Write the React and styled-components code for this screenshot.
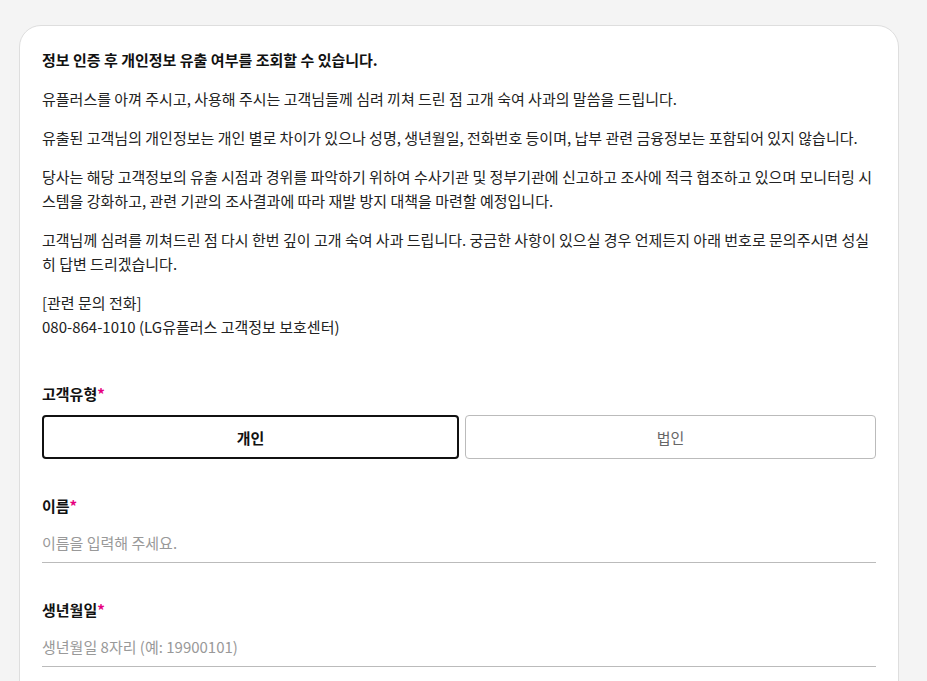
import React from 'react';
import styled, { createGlobalStyle } from 'styled-components';

const GlobalStyle = createGlobalStyle`
  html, body {
    margin: 0;
    padding: 0;
    overflow: hidden;
    background: #f4f4f4;
  }
  body {
    font-family: "Noto Sans CJK KR", "Noto Sans", sans-serif;
    color: #222;
  }
  * { box-sizing: border-box; }
`;

const Page = styled.div`
  padding: 25px 28px 0 19px;
`;

const Card = styled.div`
  background: #fff;
  border: 1px solid #dedede;
  border-radius: 22px;
  padding: 22px 22px 80px;
`;

const Notice = styled.div`
  font-size: 15px;
  line-height: 24px;
  word-break: break-all;
`;

const Para = styled.p`
  margin: 0 0 15px;
  font-weight: ${p => (p.strong ? 700 : 400)};
  color: ${p => (p.strong ? '#111' : '#222')};
  &:last-child { margin-bottom: 0; }
`;

const Form = styled.div`
  margin-top: 44px;
  display: flex;
  flex-direction: column;
  gap: 36px;
`;

const Field = styled.div`
  display: flex;
  flex-direction: column;
`;

const Label = styled.div`
  font-size: 15px;
  line-height: 22px;
  font-weight: 700;
  color: #111;
  margin-bottom: ${p => (p.tight ? '4px' : '10px')};
`;

const Req = styled.span`
  color: #e6007e;
`;

const Segments = styled.div`
  display: grid;
  grid-template-columns: 417fr 411fr;
  gap: 6px;
`;

const Segment = styled.button`
  height: 44px;
  background: #fff;
  border-radius: 4px;
  border: ${p => (p.active ? '2px solid #111' : '1px solid #bbb')};
  font-family: inherit;
  font-size: 15px;
  font-weight: ${p => (p.active ? 700 : 400)};
  color: ${p => (p.active ? '#111' : '#666')};
  cursor: pointer;
`;

const Input = styled.input`
  height: 42px;
  border: none;
  border-bottom: 1px solid #bbb;
  padding: 1px 0 0;
  font-family: inherit;
  font-size: 15px;
  color: #222;
  outline: none;
  &::placeholder { color: #999; }
`;

export default function App() {
  return (
    <>
      <GlobalStyle />
      <Page>
        <Card>
          <Notice>
            <Para strong>정보 인증 후 개인정보 유출 여부를 조회할 수 있습니다.</Para>
            <Para>유플러스를 아껴 주시고, 사용해 주시는 고객님들께 심려 끼쳐 드린 점 고개 숙여 사과의 말씀을 드립니다.</Para>
            <Para>유출된 고객님의 개인정보는 개인 별로 차이가 있으나 성명, 생년월일, 전화번호 등이며, 납부 관련 금융정보는 포함되어 있지 않습니다.</Para>
            <Para>당사는 해당 고객정보의 유출 시점과 경위를 파악하기 위하여 수사기관 및 정부기관에 신고하고 조사에 적극 협조하고 있으며 모니터링 시스템을 강화하고, 관련 기관의 조사결과에 따라 재발 방지 대책을 마련할 예정입니다.</Para>
            <Para>고객님께 심려를 끼쳐드린 점 다시 한번 깊이 고개 숙여 사과 드립니다. 궁금한 사항이 있으실 경우 언제든지 아래 번호로 문의주시면 성실히 답변 드리겠습니다.</Para>
            <Para>
              [관련 문의 전화]
              <br />
              080-864-1010 (LG유플러스 고객정보 보호센터)
            </Para>
          </Notice>
          <Form>
            <Field>
              <Label>고객유형<Req>*</Req></Label>
              <Segments>
                <Segment active>개인</Segment>
                <Segment>법인</Segment>
              </Segments>
            </Field>
            <Field>
              <Label tight>이름<Req>*</Req></Label>
              <Input placeholder="이름을 입력해 주세요." />
            </Field>
            <Field>
              <Label tight>생년월일<Req>*</Req></Label>
              <Input placeholder="생년월일 8자리 (예: 19900101)" />
            </Field>
          </Form>
        </Card>
      </Page>
    </>
  );
}
